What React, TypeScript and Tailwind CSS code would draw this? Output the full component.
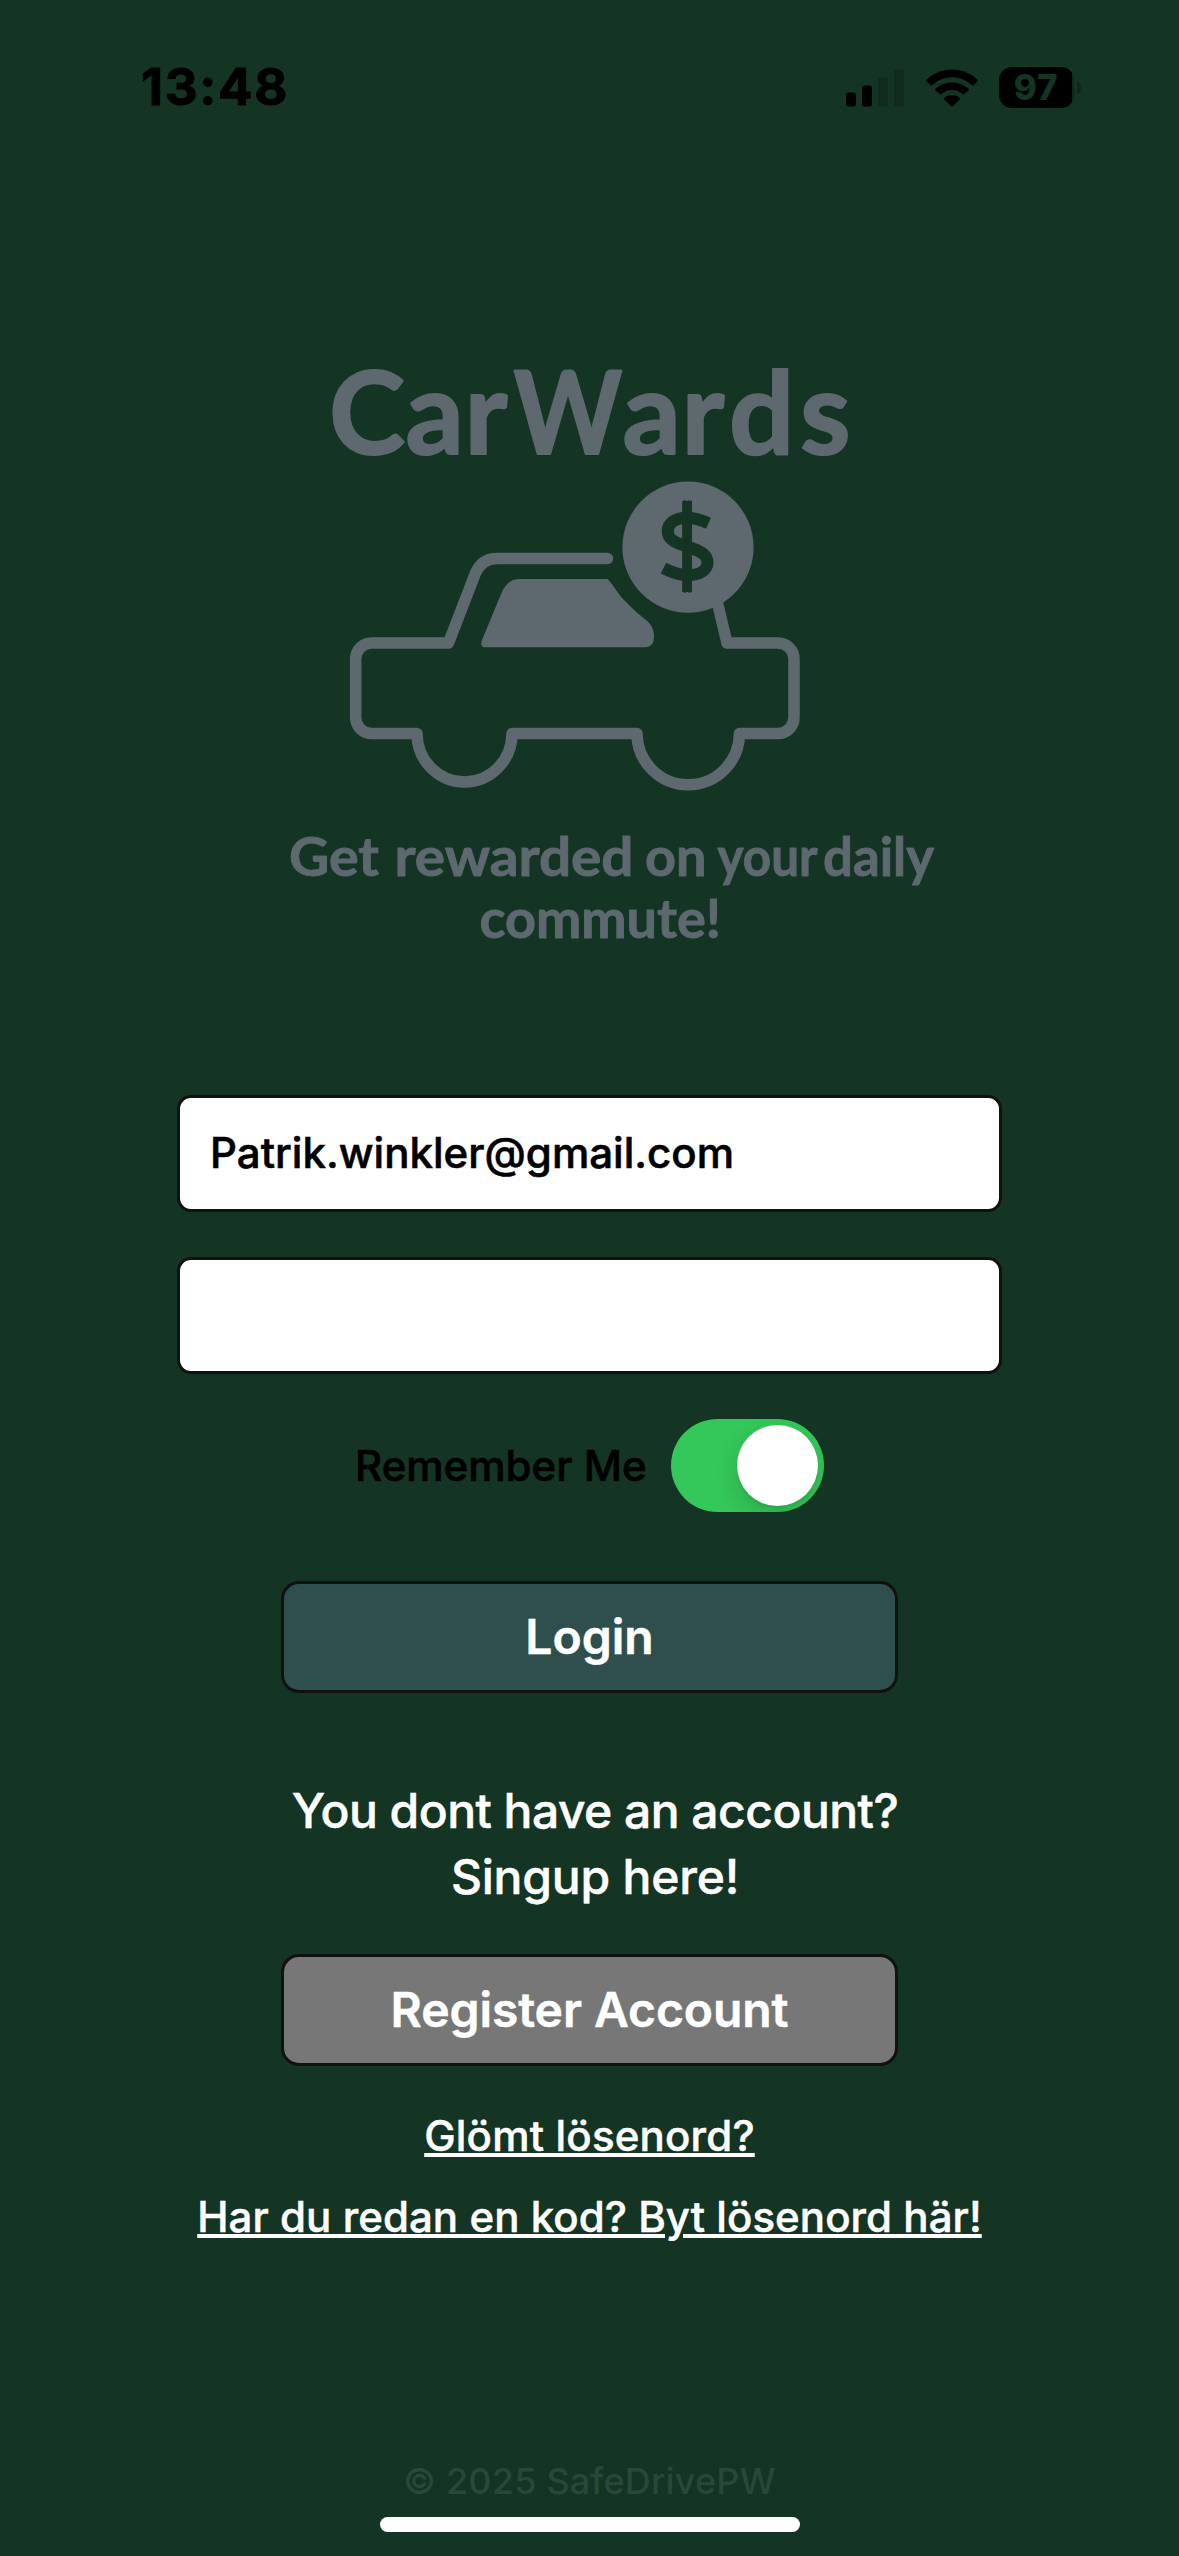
import { useState } from "react";

function CellularIcon() {
  return (
    <svg className="h-[38px] w-[58px]" viewBox="0 0 58 38">
      <rect x="0" y="23.5" width="10" height="14" rx="2.8" fill="#000" />
      <rect x="16" y="16.5" width="10" height="21" rx="2.8" fill="#000" />
      <rect x="32" y="8.5" width="10" height="29" rx="2.8" fill="#102a1d" />
      <rect x="48" y="0.5" width="10" height="37" rx="2.8" fill="#102a1d" />
    </svg>
  );
}

function WifiIcon() {
  return (
    <svg className="h-[38px] w-[52px]" viewBox="0 0 52 38">
      <path d="M26 0.5C16 0.5 7 4.4 0.6 10.7C0 11.3 0 12 0.5 12.5L4.7 16.2C5.2 16.7 5.9 16.6 6.4 16.1C11.5 11.2 18.4 8.2 26 8.2C33.6 8.2 40.5 11.2 45.6 16.1C46.1 16.6 46.8 16.7 47.3 16.2L51.5 12.5C52 12 52 11.3 51.4 10.7C45 4.4 36 0.5 26 0.5Z" />
      <path d="M26 13.4C19.600 13.4 13.800 15.800 9.500 19.800C9 20.300 9 21 9.500 21.500L13.800 25.200C14.300 25.600 14.900 25.600 15.400 25.100C18.200 22.600 21.900 21 26 21C30.100 21 33.800 22.600 36.600 25.100C37.100 25.600 37.700 25.600 38.200 25.200L42.500 21.500C43 21 43 20.300 42.500 19.800C38.200 15.800 32.400 13.400 26 13.400Z" />
      <path d="M26 26.1C23 26.100 20.300 27.200 18.300 29C17.800 29.500 17.800 30.200 18.300 30.600L25 37.100C25.600 37.600 26.400 37.600 27 37.100L33.700 30.600C34.200 30.200 34.200 29.500 33.700 29C31.700 27.200 29 26.100 26 26.100Z" />
    </svg>
  );
}

function Battery({ level }: { level: number }) {
  return (
    <div className="flex items-center">
      <div className="flex h-[41px] w-[75px] overflow-hidden rounded-[13px] bg-[#0f281b]">
        <div className="flex h-full w-[73px] items-center justify-center bg-black pl-[1px] text-[35px] leading-[41px] font-extrabold tracking-[0.8px] text-[#143424]">
          {level}
        </div>
      </div>
      <svg className="ml-[3px] h-[13px] w-[4px]" viewBox="0 0 4 13">
        <path d="M0 0C2.600 1 4 3.500 4 6.500C4 9.500 2.600 12 0 13Z" fill="#0f281b" />
      </svg>
    </div>
  );
}

function Logo() {
  return (
    <svg className="ml-[270px] h-[650px] w-[690px] shrink-0" viewBox="270 310 690 650" fill="#5d696f">
      <g className="font-['Lato',sans-serif] text-[115px] font-bold" stroke="#5d696f" strokeWidth="2" strokeLinejoin="round">
        <text y="454" x="329 405.500 464.500">Car</text>
        <text y="454" x="513.500" textLength="109" lengthAdjust="spacingAndGlyphs">W</text>
        <text y="454" x="622.500 681.500 729 800">ards</text>
      </g>

      <path
        d="M607.500 558.500H497C486.500 558.500 479.500 564 475.500 573L448.500 643H371.700A16 16 0 0 0 355.700 659V717.500A16 16 0 0 0 371.700 733.500H417A47.500 48.500 0 0 0 512 733.500H637A51.200 51.200 0 0 0 739.400 733.500H778A16 16 0 0 0 794 717.500V659A16 16 0 0 0 778 643H727L717.500 603"
        fill="none"
        stroke="#5d696f"
        strokeWidth="11.500"
        strokeLinejoin="round"
        strokeLinecap="round"
      />
      <path d="M520 579H607.500C612 583 616 591 624 600C632 608.500 640 615 646.500 620.500C652 625 654 630.500 654 636.500C654 643.500 651 647.300 644.500 647.300H484.500C481 647.300 480.500 644 482 640L501.700 592.500C505.500 584 511 579 520 579Z" />
      <circle cx="688" cy="547.200" r="65.600" />
      <g fill="none" stroke="#143424">
        <path d="M708.500 523.200C701 520 693.500 517.700 687 517.700C675.500 517.700 667.700 523 667.700 531C667.700 539.500 674.500 542.500 687.500 546.700C700.500 550.800 707.500 554.500 707.500 562C707.500 570.500 699.500 575.200 687.500 575.200C680 575.200 672 572.500 663.500 568.200" strokeWidth="12" />
        <path d="M687.200 501V592" strokeWidth="9.600" />
        <path d="M684.700 502.500V590.500M689.700 502.500V590.500" strokeWidth="4.600" strokeLinecap="round" />
      </g>

      <g className="font-['Lato',sans-serif] text-[54px] font-bold" stroke="#5d696f" strokeWidth="0.900">
        <text x="289" y="876" textLength="90" lengthAdjust="spacingAndGlyphs">Get</text>
        <text x="394.500" y="876" textLength="239" lengthAdjust="spacingAndGlyphs">rewarded</text>
        <text x="645" y="876" textLength="61.500" lengthAdjust="spacingAndGlyphs">on</text>
        <text x="717.500" y="876" textLength="100" lengthAdjust="spacingAndGlyphs">your</text>
        <text x="823" y="876" textLength="111" lengthAdjust="spacingAndGlyphs">daily</text>
        <text x="479.500" y="938" textLength="241.500" lengthAdjust="spacingAndGlyphs">commute!</text>
      </g>
    </svg>
  );
}

const field =
  "h-[117px] w-[825px] rounded-[14px] border-[3px] border-[#111] bg-white pb-[2px] pl-[30px] text-[42px] font-medium tracking-[0.03px] text-black outline-none [-webkit-text-stroke:0.6px_#000]";

export default function App() {
  const [email, setEmail] = useState("Patrik.winkler@gmail.com");
  const [password, setPassword] = useState("");
  const [remember, setRemember] = useState(true);

  return (
    <div className="flex h-[2556px] w-[1179px] flex-col overflow-hidden bg-[#143424] font-['Inter',sans-serif] text-white">
      <header className="flex h-[175px] shrink-0 items-center pr-[98px] pl-[141px] text-black">
        <div className="text-[51px] font-bold tracking-[1.7px] [-webkit-text-stroke:1px_#000]">13:48</div>
        <div className="ml-auto flex items-center">
          <CellularIcon />
          <div className="ml-[22px]">
            <WifiIcon />
          </div>
          <div className="ml-[21px]">
            <Battery level={97} />
          </div>
        </div>
      </header>

      <div className="mt-[135px] flex">
        <Logo />
      </div>

      <form className="mt-[135px] flex flex-col items-center" onSubmit={(e) => e.preventDefault()}>
        <input className={field} value={email} onChange={(e) => setEmail(e.target.value)} />
        <input className={`${field} mt-[45px]`} type="password" value={password} onChange={(e) => setPassword(e.target.value)} />

        <div className="mt-[45px] flex h-[93px] w-full items-center pl-[355px]">
          <span className="w-[316px] text-[42px] font-medium text-black [-webkit-text-stroke:0.6px_#000]">Remember Me</span>
          <button
            type="button"
            role="switch"
            aria-checked={remember}
            onClick={() => setRemember(!remember)}
            className="flex h-[93px] w-[153px] items-center justify-end overflow-hidden rounded-full bg-[#34c759] pr-[6px]"
          >
            <span className="h-[81px] w-[81px] rounded-full bg-white shadow-[0_9px_24px_rgba(0,0,0,0.15),0_3px_3px_rgba(0,0,0,0.06)]" />
          </button>
        </div>

        <button className="mt-[69px] h-[112px] w-[617px] rounded-[18px] border-[3px] border-[#111] bg-[#2f4f4f] text-[48px] font-semibold [-webkit-text-stroke:0.5px_#fff]">
          Login
        </button>
      </form>

      <p className="mt-[85px] pl-[11px] text-center text-[48px] leading-[66px] font-medium tracking-[-0.53px] [-webkit-text-stroke:0.5px_#fff]">
        You dont have an account?
        <br />
        <span className="tracking-[-0.2px]">Singup here!</span>
      </p>

      <div className="mt-[44px] flex flex-col items-center">
        <button className="h-[112px] w-[617px] rounded-[18px] border-[3px] border-[#111] bg-[#777] text-[48px] font-semibold tracking-[-0.08px] [-webkit-text-stroke:0.5px_#fff]">
          Register Account
        </button>
        <a className="mt-[40px] text-[42px] leading-[60px] font-medium tracking-[0.2px] underline decoration-[4px] underline-offset-[2px] [-webkit-text-stroke:0.5px_#fff]">
          Glömt lösenord?
        </a>
        <a className="mt-[21px] text-[42px] leading-[60px] font-medium tracking-[0.06px] underline decoration-[4px] underline-offset-[2px] [-webkit-text-stroke:0.5px_#fff]">
          Har du redan en kod? Byt lösenord här!
        </a>
      </div>

      <footer className="mt-[214px] flex flex-col items-center">
        <p className="text-[36px] leading-[40px] font-medium tracking-[0.2px] text-[#294839]">© 2025 SafeDrivePW</p>
        <div className="mt-[16px] h-[15px] w-[420px] rounded-full bg-white" />
      </footer>
    </div>
  );
}
